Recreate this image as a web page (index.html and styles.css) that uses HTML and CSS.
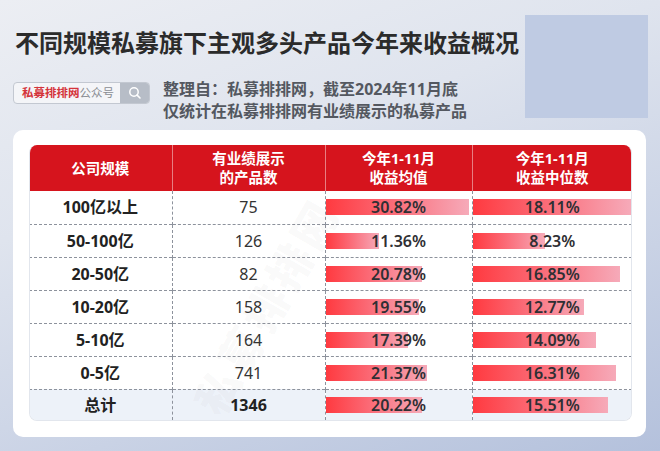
FILE: index.html
```html
<!DOCTYPE html>
<html lang="zh-CN">
<head>
<meta charset="utf-8">
<title>不同规模私募旗下主观多头产品今年来收益概况</title>
<link rel="stylesheet" href="styles.css">
</head>
<body>
<div class="page">
  <div class="head">
    <div class="head-left">
      <h1 class="title">不同规模私募旗下主观多头产品今年来收益概况</h1>
      <div class="info">
        <div class="search">
          <div class="search-text"><span class="brand">私募排排网</span><span class="gzh">公众号</span></div>
          <div class="search-btn">
            <svg width="14" height="14" viewBox="0 0 14 14"><circle cx="6" cy="6" r="4.2" fill="none" stroke="#fff" stroke-width="1.5"/><line x1="9.1" y1="9.1" x2="12" y2="12" stroke="#fff" stroke-width="1.6" stroke-linecap="round"/></svg>
          </div>
        </div>
        <div class="source">
          <div>整理自：私募排排网，截至2024年11月底</div>
          <div>仅统计在私募排排网有业绩展示的私募产品</div>
        </div>
      </div>
    </div>
    <div class="blue-box"></div>
  </div>

  <div class="card">
    <div class="tbl">
      <table>
        <thead>
          <tr>
            <th class="c1">公司规模</th>
            <th class="c2">有业绩展示<br>的产品数</th>
            <th class="c3">今年1-11月<br>收益均值</th>
            <th class="c4">今年1-11月<br>收益中位数</th>
          </tr>
        </thead>
        <tbody>
          <tr>
            <td class="name">100亿以上</td><td class="num">75</td>
            <td class="bar-cell"><div class="bar" style="width:98%"></div><span class="val">30.82%</span></td>
            <td class="bar-cell"><div class="bar" style="width:99.5%"></div><span class="val">18.11%</span></td>
          </tr>
          <tr>
            <td class="name">50-100亿</td><td class="num">126</td>
            <td class="bar-cell"><div class="bar" style="width:36.5%"></div><span class="val">11.36%</span></td>
            <td class="bar-cell"><div class="bar" style="width:45.2%"></div><span class="val">8.23%</span></td>
          </tr>
          <tr>
            <td class="name">20-50亿</td><td class="num">82</td>
            <td class="bar-cell"><div class="bar" style="width:65.8%"></div><span class="val">20.78%</span></td>
            <td class="bar-cell"><div class="bar" style="width:92.5%"></div><span class="val">16.85%</span></td>
          </tr>
          <tr>
            <td class="name">10-20亿</td><td class="num">158</td>
            <td class="bar-cell"><div class="bar" style="width:63.9%"></div><span class="val">19.55%</span></td>
            <td class="bar-cell"><div class="bar" style="width:69.8%"></div><span class="val">12.77%</span></td>
          </tr>
          <tr>
            <td class="name">5-10亿</td><td class="num">164</td>
            <td class="bar-cell"><div class="bar" style="width:56.5%"></div><span class="val">17.39%</span></td>
            <td class="bar-cell"><div class="bar" style="width:77.4%"></div><span class="val">14.09%</span></td>
          </tr>
          <tr>
            <td class="name">0-5亿</td><td class="num">741</td>
            <td class="bar-cell"><div class="bar" style="width:69.4%"></div><span class="val">21.37%</span></td>
            <td class="bar-cell"><div class="bar" style="width:89.9%"></div><span class="val">16.31%</span></td>
          </tr>
          <tr class="total">
            <td class="name">总计</td><td class="num strong">1346</td>
            <td class="bar-cell"><div class="bar" style="width:66%"></div><span class="val">20.22%</span></td>
            <td class="bar-cell"><div class="bar" style="width:85%"></div><span class="val">15.51%</span></td>
          </tr>
        </tbody>
      </table>
    </div>
    <div class="watermark">私募排排网</div>
  </div>
</div>
</body>
</html>
```

FILE: styles.css
```css
* { box-sizing: border-box; }

html, body {
  margin: 0;
  padding: 0;
}

body {
  width: 660px;
  height: 451px;
  overflow: hidden;
  font-family: "Noto Sans", "Noto Sans CJK SC", sans-serif;
  background: linear-gradient(160deg, #eceef3 0%, #dfe4ee 35%, #c9d2e5 70%, #b4c1dc 100%);
  color: #222;
}

.page {
  width: 660px;
  height: 451px;
}

.head {
  height: 130px;
  padding: 15px 12px 0 15px;
  display: flex;
  justify-content: space-between;
  align-items: flex-start;
}

.head-left {
  padding-top: 13px;
}

.title {
  margin: 0;
  font-size: 24px;
  line-height: 30px;
  font-weight: 700;
  color: #2b2b2b;
}

.info {
  display: flex;
  align-items: flex-start;
  margin-top: 20px;
  margin-left: -2px;
}

.search {
  margin-top: 4px;
  width: 137px;
  height: 22px;
  display: flex;
  border: 1px solid #c3c8d1;
  border-radius: 4px;
  overflow: hidden;
  background: #f4f5f8;
}

.search-text {
  flex: 1;
  display: flex;
  align-items: center;
  padding-left: 8px;
  font-size: 11.5px;
  line-height: 20px;
  white-space: nowrap;
}

.brand {
  color: #d4343b;
  font-weight: 700;
}

.gzh {
  color: #8a8d93;
}

.search-btn {
  width: 29px;
  background: #b7bdc7;
  display: flex;
  align-items: center;
  justify-content: center;
}

.source {
  margin-left: 13px;
  font-size: 16px;
  line-height: 22px;
  font-weight: 700;
  color: #545860;
}

.blue-box {
  width: 123px;
  height: 103px;
  background: #bfcbe3;
}

.card {
  position: relative;
  margin: 0 14px 0 13px;
  height: 307px;
  padding: 15px 14px 17px 16px;
  background: #ffffff;
  border-radius: 10px;
  overflow: hidden;
}

.tbl {
  position: relative;
  z-index: 1;
  border-radius: 8px;
  overflow: hidden;
  border: 1px solid #e2e6ed;
  border-top: none;
}

table {
  width: 603px;
  border-collapse: collapse;
  table-layout: fixed;
  margin: 0 -1px;
}

th {
  height: 46px;
  background: #d6141d;
  color: #ffffff;
  font-size: 14.5px;
  line-height: 19px;
  font-weight: 700;
  text-align: center;
  padding: 0;
  border-right: 1px solid rgba(255, 255, 255, 0.45);
}

th:last-child { border-right: none; }

.c1 { width: 143px; }
.c2 { width: 153px; }
.c3 { width: 147px; }
.c4 { width: 160px; }

td {
  height: 33px;
  padding: 0;
  text-align: center;
  font-size: 16px;
  line-height: 20px;
  border-top: 1px dashed #8d929c;
  border-right: 1px dashed #8d929c;
}

tbody tr:first-child td { border-top: none; }

td:last-child { border-right: none; }

tr.total td {
  height: 31px;
  background: rgba(230, 236, 246, 0.7);
}

.name {
  font-weight: 700;
  color: #222;
}

.num {
  color: #333;
  font-weight: 400;
}

.num.strong {
  font-weight: 700;
  color: #222;
}

.bar-cell {
  position: relative;
}

.bar {
  position: absolute;
  left: 0;
  top: 50%;
  height: 16px;
  margin-top: -8px;
  background: linear-gradient(90deg, #ff3a40 0%, #fb6a76 45%, #f6aab9 100%);
}

.val {
  position: relative;
  font-weight: 600;
  color: #2f2f33;
}

.watermark {
  position: absolute;
  z-index: 2;
  left: 172px;
  top: 268px;
  font-size: 44px;
  line-height: 50px;
  font-weight: 900;
  color: rgba(110, 110, 110, 0.05);
  transform: rotate(-60deg);
  transform-origin: left top;
  white-space: nowrap;
  pointer-events: none;
  letter-spacing: 4px;
}
```
